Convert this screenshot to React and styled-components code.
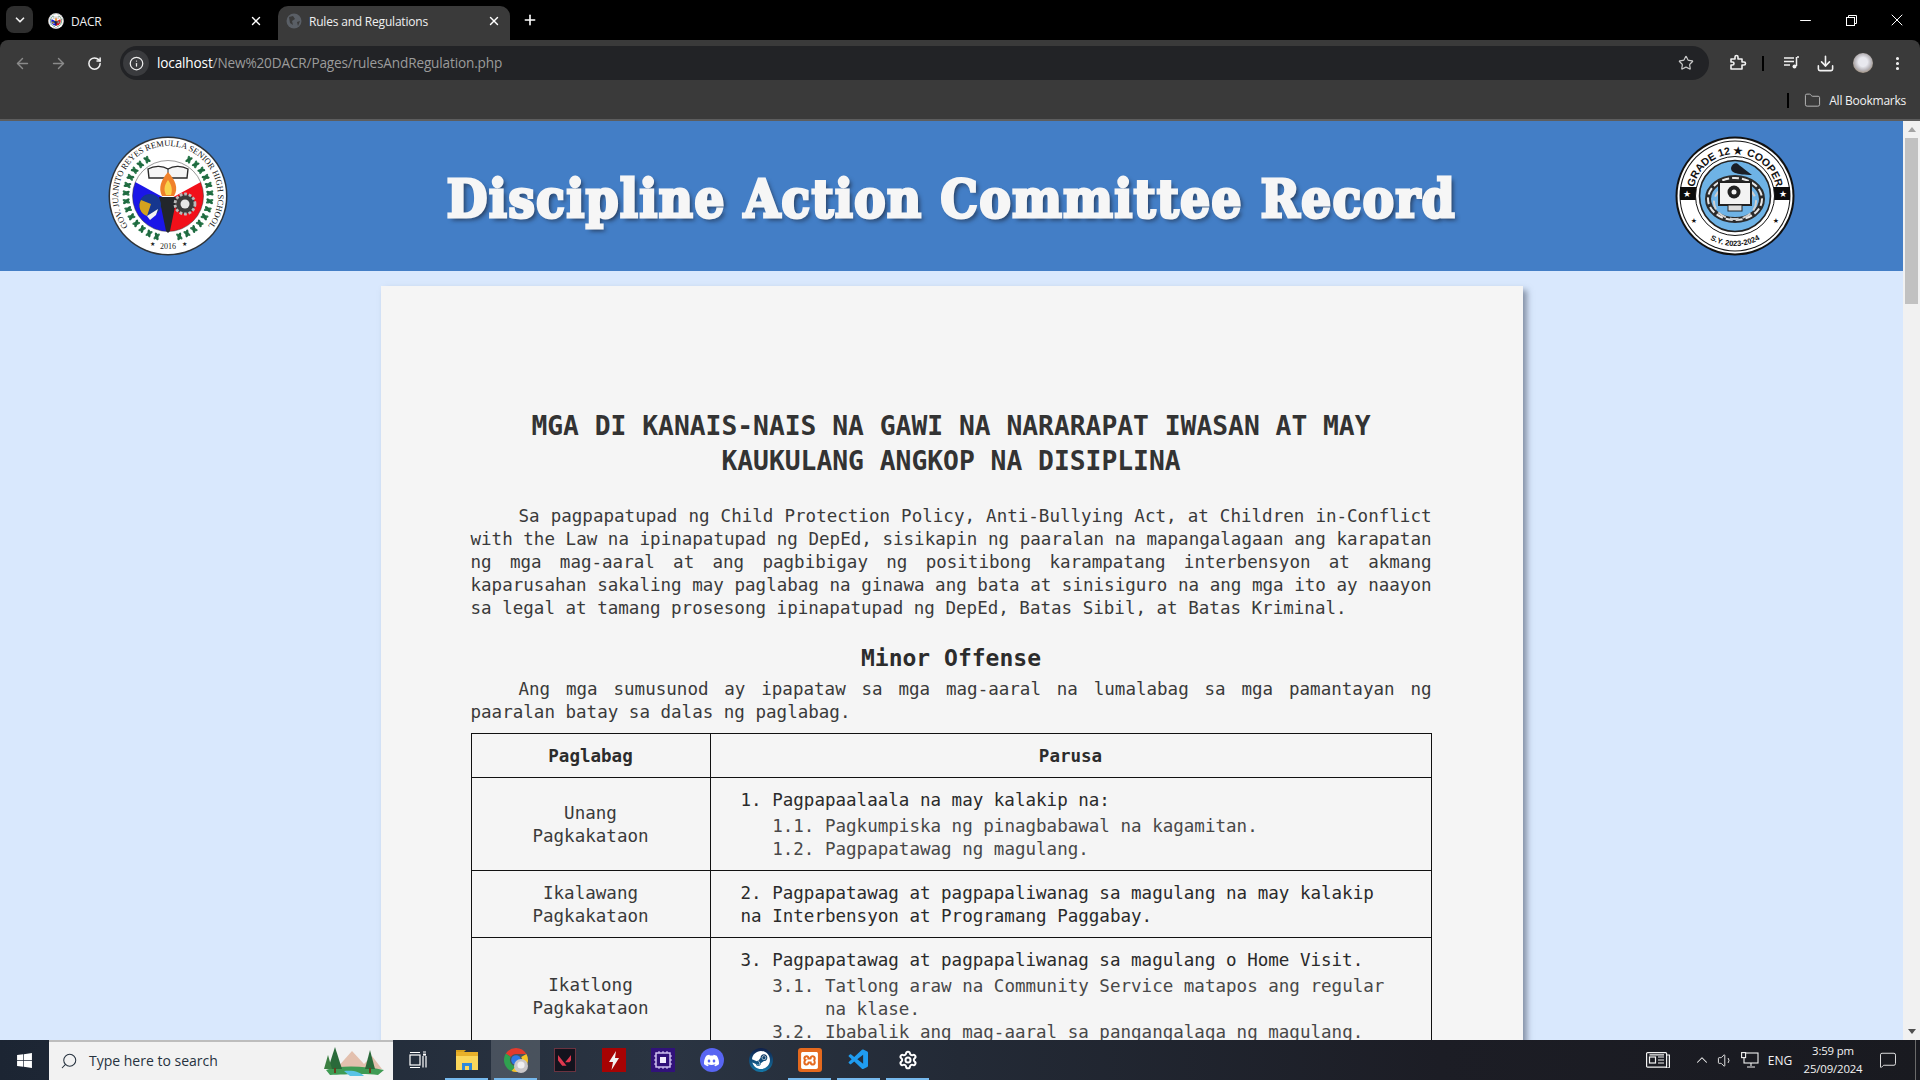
import React from 'react'
import styled, { createGlobalStyle } from 'styled-components'
import {
  ArrowLeft, ArrowRight, RotateCw, Info, Star, Download, MoreVertical, ChevronDown, ChevronUp,
  X, Plus, Minus, Folder, Search, Volume1, MessageSquare, Settings,
} from 'lucide-react'
import { FaWindows } from 'react-icons/fa'
import { SiDiscord, SiSteam, SiValorant, SiXampp } from 'react-icons/si'
import { VscVscode } from 'react-icons/vsc'

const GlobalStyle = createGlobalStyle`
  html, body { margin: 0; padding: 0; height: 100%; overflow: hidden; }
  * { box-sizing: border-box; }
`

const Screen = styled.div`
  width: 1920px;
  height: 1080px;
  display: flex;
  flex-direction: column;
  overflow: hidden;
  background: #000;
  font-family: "Open Sans", "Liberation Sans", sans-serif;
`

/* browser chrome */
const TabStrip = styled.div`
  height: 40px;
  flex: none;
  background: #000;
  display: flex;
  padding: 6px 0 0 6px;
  color: #fff;
`
const TabSearch = styled.div`
  width: 27px;
  height: 27px;
  border-radius: 8px;
  background: #2f2f2f;
  display: flex;
  align-items: center;
  justify-content: center;
  margin-right: 5px;
`
const Tab = styled.div`
  width: 232px;
  height: 34px;
  flex: none;
  display: flex;
  align-items: center;
  padding: 0 ${p => (p.$active ? 9 : 7)}px 4px ${p => (p.$active ? 8 : 10)}px;
  margin-left: ${p => (p.$active ? 8 : 0)}px;
  background: ${p => (p.$active ? '#3a3a3a' : 'transparent')};
  border-radius: 10px 10px 0 0;
  font-size: 12px;
  letter-spacing: -0.2px;
`
const TabTitle = styled.span`
  flex: 1;
  margin-left: 7px;
  color: #f0f0f0;
`
const NewTab = styled.div`
  width: 40px;
  height: 28px;
  display: flex;
  align-items: center;
  justify-content: center;
`
const WindowControls = styled.div`
  margin-left: auto;
  margin-top: -6px;
  display: flex;
  height: 40px;
  align-items: center;
`
const WindowButton = styled.div`
  width: 46px;
  display: flex;
  justify-content: center;
`
const Toolbar = styled.div`
  height: 46px;
  flex: none;
  background: #3a3a3a;
  border-radius: 8px 8px 0 0;
  display: flex;
  align-items: center;
  padding: 0 0 0 4px;
`
const NavButton = styled.div`
  width: ${p => p.$w || 36}px;
  margin-left: ${p => p.$ml || 0}px;
  flex: none;
  display: flex;
  justify-content: center;
  color: ${p => (p.$dim ? '#8a8a8a' : '#f2f2f2')};
`
const Omnibox = styled.div`
  width: 1589px;
  height: 34px;
  flex: none;
  margin: 0 8px;
  border-radius: 17px;
  background: #222326;
  display: flex;
  align-items: center;
  padding: 0 15px 0 3px;
  font-size: 13.6px;
  letter-spacing: -0.15px;
  color: #9b9b9b;
`
const InfoBadge = styled.div`
  width: 26px;
  height: 26px;
  border-radius: 50%;
  background: #3a3b3e;
  color: #eee;
  display: flex;
  align-items: center;
  justify-content: center;
  margin-right: 8px;
`
const UrlText = styled.span`
  margin-top: -2px;
`
const Host = styled.span`
  color: #fff;
`
const StarWrap = styled.div`
  margin-left: auto;
  display: flex;
  color: #c8c8c8;
`
const Divider = styled.div`
  width: 2px;
  height: 15px;
  margin-left: ${p => p.$ml || 0}px;
  background: #000;
  flex: none;
`
const BookmarkBar = styled.div`
  height: 35px;
  flex: none;
  background: #3a3a3a;
  border-bottom: 2px solid #5d5d5d;
  display: flex;
  align-items: center;
  justify-content: flex-end;
  padding: 0 14px 5px 0;
  color: #f2f2f2;
  font-size: 12px;
  letter-spacing: -0.25px;
`
const FolderWrap = styled.div`
  display: flex;
  margin: 0 8px 0 15px;
  color: #b5b5b5;
`
const Avatar = styled.div`
  width: 20px;
  height: 20px;
  border-radius: 50%;
  background: radial-gradient(circle at 50% 45%, #e8e8ee 0 30%, #b9b6bb 55%, #8f7a5c 88%);
`

/* page */
const Viewport = styled.div`
  flex: 1;
  min-height: 0;
  display: flex;
  overflow: hidden;
`
const PageArea = styled.div`
  flex: 1;
  min-width: 0;
  overflow: hidden;
  background: #d9e8fd;
`
const Scrollbar = styled.div`
  width: 17px;
  flex: none;
  background: #f1f1f1;
  display: flex;
  flex-direction: column;
  align-items: center;
  padding: 6px 0;
`
const ScrollArrow = styled.div`
  width: 0;
  height: 0;
  border-left: 4px solid transparent;
  border-right: 4px solid transparent;
  ${p => (p.$down ? 'border-top: 5px solid #505050;' : 'border-bottom: 5px solid #a3a3a3;')}
`
const ScrollThumb = styled.div`
  width: 13px;
  height: 166px;
  margin-top: 6px;
  background: #c1c1c1;
`
const ScrollSpacer = styled.div`
  flex: 1;
`
const Header = styled.header`
  height: 150px;
  background: #437ec6;
  display: flex;
  align-items: center;
  justify-content: space-between;
  padding: 0 108px;
`
const SiteTitle = styled.h1`
  margin: 6px 0 0;
  font-family: "DejaVu Serif Condensed", "DejaVu Serif", serif;
  font-weight: 700;
  font-size: 52px;
  line-height: 1;
  color: #f6f6f6;
  -webkit-text-stroke: 3px #f6f6f6;
  letter-spacing: 1.6px;
  text-shadow: 3px 3px 4px rgba(30, 40, 60, 0.75);
  white-space: nowrap;
`
const Paper = styled.main`
  width: 1142px;
  margin: 15px auto 0;
  padding: 123px 91px 40px 90px;
  background: #f5f5f5;
  box-shadow: 4px 4px 6px rgba(50, 60, 80, 0.5);
  font-family: "DejaVu Sans Mono", "Liberation Mono", monospace;
  font-size: 17.55px;
  line-height: 23px;
  color: #3a3a3a;
`
const PaperTitle = styled.h2`
  margin: 0 0 26px;
  font-size: 26.3px;
  line-height: 35px;
  font-weight: 700;
  text-align: center;
  color: #333;
`
const Paragraph = styled.p`
  margin: 0;
  text-align: justify;
  text-indent: 48px;
`
const SectionTitle = styled.h3`
  margin: 24px 0 6px;
  font-size: 23px;
  line-height: 28px;
  font-weight: 700;
  text-align: center;
  color: #2c2c2c;
`
const RuleTable = styled.table`
  width: 100%;
  margin-top: 9px;
  border-collapse: collapse;
  table-layout: fixed;
`
const HeadCell = styled.th`
  border: 1px solid #111;
  padding: 11px 10px 9px;
  font-weight: 700;
  color: #2c2c2c;
  width: ${p => p.$w || 'auto'};
`
const WhenCell = styled.td`
  border: 1px solid #111;
  padding: 11px 10px 9px;
  text-align: center;
`
const PenaltyCell = styled.td`
  border: 1px solid #111;
  padding: 11px 29px 9px 30px;
  color: #2e2e2e;
`
const MainItem = styled.div`
  margin-bottom: ${p => (p.$alone ? 0 : 3)}px;
  color: #2a2a2a;
`
const SubItem = styled.div`
  padding-left: 8ch;
  text-indent: -5ch;
  color: #484848;
`

/* taskbar */
const Taskbar = styled.footer`
  height: 40px;
  flex: none;
  display: flex;
  background: linear-gradient(90deg, #1c2533 0, #2a3442 35%, #232a36 50%, #1c1d25 75%, #191a20 100%);
  color: #fff;
`
const StartButton = styled.div`
  width: 49px;
  display: flex;
  align-items: center;
  justify-content: center;
`
const SearchBox = styled.div`
  width: 344px;
  background: #f2f2f2;
  border-top: 2px solid #bdbdbd;
  display: flex;
  align-items: center;
  padding: 0 7px 0 11px;
  color: #26323f;
  font-size: 14px;
`
const SearchGlass = styled(Search)`
  transform: scaleX(-1);
`
const SearchLabel = styled.span`
  margin: -2px 0 0 11px;
  flex: 1;
`
const TaskIcon = styled.div`
  width: 49px;
  flex: none;
  display: flex;
  align-items: center;
  justify-content: center;
  position: relative;
  background: ${p => (p.$focus ? 'rgba(255,255,255,0.16)' : 'transparent')};
  &::after {
    content: '';
    display: ${p => (p.$open ? 'block' : 'none')};
    position: absolute;
    left: 3px;
    right: 3px;
    bottom: 0;
    height: 2px;
    background: #76b9ed;
  }
`
const Tray = styled.div`
  margin-left: auto;
  display: flex;
  align-items: center;
  font-size: 12px;
  color: #f2f2f2;
`
const TrayIcon = styled.div`
  width: ${p => p.$w || 24}px;
  margin-left: ${p => p.$ml || 0}px;
  display: flex;
  justify-content: center;
`
const Clock = styled.div`
  width: 76px;
  text-align: center;
  line-height: 18px;
  font-size: 11.4px;
  letter-spacing: -0.15px;
`
const ShowDesktop = styled.div`
  width: 1px;
  height: 40px;
  margin: 0 4px 0 10px;
  background: #6a6a6a;
`

const arcText = (id, d) => <path id={id} d={d} fill="none" />

const SchoolLogo = ({ size = 120, uid = 'school' }) => (
  <svg width={size} height={size} viewBox="0 0 120 120">
    <defs>
      <clipPath id={`${uid}Inner`}><circle cx="60" cy="60" r="35.5" /></clipPath>
    </defs>
    <circle cx="60" cy="60" r="59.5" fill="#2e3338" />
    <circle cx="60" cy="60" r="58" fill="#fff" />
    {arcText(`${uid}Arc`, 'M 31.3 101 A 50 50 0 1 1 88.7 101')}
    <text fontFamily="Liberation Serif, serif" fontSize="8.5" fill="#111">
      <textPath href={`#${uid}Arc`} startOffset="50%" textAnchor="middle">GOV. JUANITO REYES REMULLA SENIOR HIGH SCHOOL</textPath>
    </text>
    {Array.from({ length: 13 }).map((_, i) => {
      const a = 30 + i * 11.2
      return (
        <g key={i}>
          <ellipse cx="60" cy="18" rx="1.5" ry="4" fill="#2c7a4d" transform={`rotate(${a} 60 60) rotate(-32 60 18)`} />
          <ellipse cx="60" cy="18" rx="1.5" ry="4" fill="#1f6a40" transform={`rotate(${a} 60 60) rotate(32 60 18)`} />
          <ellipse cx="60" cy="18" rx="1.5" ry="4" fill="#2c7a4d" transform={`rotate(${-a} 60 60) rotate(32 60 18)`} />
          <ellipse cx="60" cy="18" rx="1.5" ry="4" fill="#1f6a40" transform={`rotate(${-a} 60 60) rotate(-32 60 18)`} />
        </g>
      )
    })}
    <g clipPath={`url(#${uid}Inner)`}>
      <rect x="20" y="20" width="80" height="80" fill="#fff" />
      <polygon points="60,64 20,42 20,100 60,100" fill="#1b16e8" />
      <polygon points="60,64 100,42 100,100 60,100" fill="#f2101a" />
    </g>
    <path d="M40 33 C47 29 55 30 60 33 C65 30 73 29 80 33 L79 42 L41 42 Z" fill="#f5f5f5" stroke="#2b2b2b" strokeWidth="1.4" />
    <path d="M60 33 V42" stroke="#2b2b2b" strokeWidth="1" />
    <circle cx="60" cy="60" r="35.5" fill="none" stroke="#333" strokeWidth="0.5" />
    <path d="M60 36 C53 44 50 52 54 60 L66 60 C71 52 67 44 60 36 Z" fill="#f0812a" />
    <path d="M60 44 C57 48 55 53 58 59 L63 59 C65 53 63 48 60 44 Z" fill="#f9d24a" />
    <path d="M51 61 L69 61 L62 95 L60 97 L58 95 Z" fill="#22262b" />
    <circle cx="42" cy="69" r="11" fill="#16378f" />
    <path d="M33 64 A11 11 0 0 0 39 80 L43 68 Z" fill="#d3a21f" />
    <path d="M39 80 L50 73 L48 79 L42 84 Z" fill="#f2f2f2" />
    <circle cx="77" cy="68" r="10" fill="#3c3c3c" stroke="#bbb" strokeWidth="2.8" strokeDasharray="2.8 1.8" />
    <circle cx="77" cy="68" r="4.5" fill="#e6e6e6" />
    <g fontFamily="Liberation Serif, serif" fill="#222" textAnchor="middle">
      <text x="60" y="113" fontSize="8">2016</text>
      <text x="44" y="110" fontSize="6">★</text>
      <text x="76" y="110" fontSize="6">★</text>
    </g>
  </svg>
)

const ClassLogo = () => (
  <svg width="120" height="120" viewBox="0 0 120 120">
    <circle cx="60" cy="60" r="59.5" fill="#111" />
    <circle cx="60" cy="60" r="57.5" fill="#fff" />
    <circle cx="60" cy="60" r="55.5" fill="#111" />
    <circle cx="60" cy="60" r="54.5" fill="#fff" />
    <rect x="5" y="51" width="110" height="13" fill="#0b0b0b" />
    <circle cx="60" cy="60" r="39.5" fill="#fff" stroke="#111" strokeWidth="1" />
    <circle cx="60" cy="60" r="35.5" fill="#6eb3e6" stroke="#222" strokeWidth="1.6" />
    {arcText('classTop', 'M 18 60 A 42 42 0 0 1 102 60')}
    {arcText('classBottom', 'M 10 60 A 50 50 0 0 0 110 60')}
    <text fontFamily="Liberation Sans, sans-serif" fontWeight="700" fontSize="10.5" fill="#111">
      <textPath href="#classTop" startOffset="50%" textAnchor="middle">GRADE 12 ★ COOPER</textPath>
    </text>
    <text fontFamily="Liberation Sans, sans-serif" fontWeight="700" fontSize="7.6" fill="#111">
      <textPath href="#classBottom" startOffset="50%" textAnchor="middle">S.Y. 2023-2024</textPath>
    </text>
    <g fill="#fff" fontSize="9" textAnchor="middle" fontFamily="DejaVu Sans, sans-serif">
      <text x="12" y="61">★</text>
      <text x="108" y="61">★</text>
    </g>
    <g fill="#111" fontSize="7" textAnchor="middle" fontFamily="DejaVu Sans, sans-serif">
      <text x="19" y="87">★</text>
      <text x="101" y="87">★</text>
    </g>
    <g fill="none">
      <ellipse cx="60" cy="63" rx="27" ry="21" stroke="#2b2b2b" strokeWidth="6" />
      <ellipse cx="60" cy="63" rx="27" ry="21" stroke="#e9e9e9" strokeWidth="2" strokeDasharray="7 3" />
      <ellipse cx="60" cy="66" rx="21" ry="17" stroke="#cfcfcf" strokeWidth="2" strokeDasharray="9 4" />
    </g>
    <rect x="44" y="46" width="32" height="23" fill="#f3f3f3" stroke="#222" strokeWidth="2" />
    <rect x="53" y="69" width="14" height="6" fill="#ddd" stroke="#222" strokeWidth="1" />
    <circle cx="59" cy="56" r="6.5" fill="#222" />
    <circle cx="59" cy="56" r="2.5" fill="#f3f3f3" />
    <path d="M56 32 C57 27 62 26 64 29 C68 32 72 35 77 39 C70 39 63 38 60 37 C57 36 56 34 56 32 Z" fill="#1a1e26" />
  </svg>
)

const ExtensionIcon = () => (
  <svg width="18" height="18" viewBox="0 0 18 18" fill="none" stroke="#f2f2f2" strokeWidth="1.6">
    <path d="M2 5 H6 V3 A1.5 1.5 0 0 1 9 3 V5 H13 V8 H15 A1.5 1.5 0 0 1 15 11 H13 V15 H2 V11 H3.5 A1.5 1.5 0 0 0 3.5 8 H2 Z" strokeLinejoin="round" />
  </svg>
)
const MediaIcon = () => (
  <svg width="16" height="14" viewBox="0 0 16 14" fill="none" stroke="#f2f2f2" strokeWidth="1.5">
    <path d="M0 2 H10 M0 5.5 H10 M0 9 H6" />
    <path d="M13 1 H15 M12.5 1 V10" />
    <circle cx="10.5" cy="10.5" r="2" fill="#f2f2f2" stroke="none" />
  </svg>
)
const RestoreIcon = () => (
  <svg width="11" height="11" viewBox="0 0 11 11" fill="none" stroke="#fff" strokeWidth="1">
    <rect x="0.5" y="2.5" width="8" height="8" />
    <path d="M2.5 2.5 V0.5 H10.5 V8.5 H8.5" />
  </svg>
)
const GlobeFavicon = () => (
  <svg width="16" height="16" viewBox="0 0 16 16">
    <circle cx="8" cy="8" r="7.5" fill="#5a5f66" />
    <path d="M3 4 L7 3 L9 6 L6 8 L7 12 L4 10 Z M11 9 L14 8 L12 13 Z" fill="#3a3a3a" />
  </svg>
)
const ChromeIcon = () => (
  <svg width="26" height="26" viewBox="0 0 26 26">
    <path d="M13 1 A12 12 0 0 1 23.4 7 L13 7 A6 6 0 0 0 7.8 10 L2.8 6.6 A12 12 0 0 1 13 1 Z" fill="#e33b2e" />
    <path d="M2.8 6.6 L7.8 10 A6 6 0 0 0 13 19 L8.5 24.1 A12 12 0 0 1 2.8 6.6 Z" fill="#2fa14f" />
    <path d="M23.4 7 A12 12 0 0 1 8.5 24.1 L13 19 A6 6 0 0 0 18.2 10 Z" fill="#f7c325" />
    <circle cx="13" cy="13" r="4.8" fill="#2f78e6" />
    <circle cx="18" cy="19" r="7" fill="#c9c7c9" />
    <circle cx="18" cy="18" r="3.6" fill="#efeff1" />
  </svg>
)
const ExplorerIcon = () => (
  <svg width="24" height="22" viewBox="0 0 24 22">
    <path d="M1 3 H9 L11 1 H1 Z" fill="#d9a21c" />
    <rect x="1" y="3" width="22" height="18" fill="#fbd75b" />
    <rect x="1" y="3" width="22" height="4" fill="#e8b02a" />
    <path d="M7 21 V14 H17 V21 H14 V17 H10 V21 Z" fill="#2f88d9" />
  </svg>
)
const BoltIcon = () => (
  <svg width="24" height="24" viewBox="0 0 24 24">
    <rect width="24" height="24" fill="#a70303" />
    <path d="M14 3 L7 14 H11 L9.5 22 L17 10 H13 Z" fill="#f2f2f2" />
  </svg>
)
const ChipIcon = () => (
  <svg width="24" height="24" viewBox="0 0 24 24">
    <rect width="24" height="24" fill="#31127a" />
    <rect x="5" y="5" width="14" height="14" fill="none" stroke="#d9cdf7" strokeWidth="1.4" />
    <rect x="9" y="9" width="6" height="6" fill="#f2eefc" />
    <path d="M8 3 V5 M12 3 V5 M16 3 V5 M8 19 V21 M12 19 V21 M16 19 V21 M3 8 H5 M3 12 H5 M3 16 H5 M19 8 H21 M19 12 H21 M19 16 H21" stroke="#d9cdf7" />
  </svg>
)
const SteamBadge = styled.div`
  width: 24px;
  height: 24px;
  border-radius: 50%;
  background: linear-gradient(#10204a, #1478a8);
  display: flex;
  align-items: center;
  justify-content: center;
`
const DiscordBadge = styled.div`
  width: 24px;
  height: 24px;
  border-radius: 50%;
  background: #5865f2;
  display: flex;
  align-items: center;
  justify-content: center;
`
const ValorantBadge = styled.div`
  width: 22px;
  height: 24px;
  background: #13131d;
  border: 1px solid #6b3340;
  display: flex;
  align-items: center;
  justify-content: center;
`
const XamppBadge = styled.div`
  width: 24px;
  height: 24px;
  border-radius: 3px;
  background: #e4691e;
  display: flex;
  align-items: center;
  justify-content: center;
`
const Landscape = () => (
  <svg width="66" height="34" viewBox="0 0 66 34">
    <path d="M16 25 L32 7 L44 20 L52 12 L62 25 Z" fill="#e3c0ae" />
    <path d="M6 26 C20 21 44 22 64 26 L58 31 C42 29 22 31 10 31 Z" fill="#3f9b54" />
    <path d="M24 27 C34 26 40 28 44 32 L30 32 Z" fill="#59c3e6" />
    <path d="M15 3 L22 25 H8 Z" fill="#2a6a3a" />
    <rect x="14" y="24" width="2" height="5" fill="#6a3d1e" />
    <path d="M50 6 L55 25 H45 Z" fill="#2a6a3a" />
    <rect x="49" y="24" width="2" height="5" fill="#6a3d1e" />
    <path d="M8 11 L12 25 H4 Z" fill="#3b7f41" />
  </svg>
)
const TaskViewIcon = () => (
  <svg width="18" height="18" viewBox="0 0 18 18" fill="none" stroke="#fff" strokeWidth="1.2">
    <rect x="1" y="4" width="10" height="10" />
    <path d="M1 1.5 H11 M1 16.5 H11 M14 1 H17 M14 16.5 V5 M17 16.5 V5" />
    <rect x="14" y="2.6" width="3" height="2" fill="#fff" stroke="none" />
  </svg>
)
const NewsIcon = () => (
  <svg width="24" height="16" viewBox="0 0 24 16" fill="none" stroke="#f2f2f2" strokeWidth="1.2">
    <rect x="0.6" y="0.6" width="20" height="14.6" rx="1" />
    <path d="M21 3 H23.4 V13.5 A1.7 1.7 0 0 1 20 15" />
    <rect x="3.5" y="5" width="6" height="6" />
    <path d="M12 5 H18 M12 8 H18 M12 11 H18 M3.5 2.8 H18" />
  </svg>
)
const NetworkIcon = () => (
  <svg width="18" height="16" viewBox="0 0 18 16" fill="none" stroke="#f2f2f2" strokeWidth="1.1">
    <rect x="3" y="1" width="14" height="10" />
    <path d="M10 11 V14 M6 15 H14" />
    <rect x="0.6" y="0.6" width="4" height="5" fill="#1c1d25" />
  </svg>
)

const Discipline = () => (
  <Paper>
    <PaperTitle>MGA DI KANAIS-NAIS NA GAWI NA NARARAPAT IWASAN AT MAY KAUKULANG ANGKOP NA DISIPLINA</PaperTitle>
    <Paragraph>
      Sa pagpapatupad ng Child Protection Policy, Anti-Bullying Act, at Children in-Conflict with the Law na
      ipinapatupad ng DepEd, sisikapin ng paaralan na mapangalagaan ang karapatan ng mga mag-aaral at ang pagbibigay
      ng positibong karampatang interbensyon at akmang kaparusahan sakaling may paglabag na ginawa ang bata at
      sinisiguro na ang mga ito ay naayon sa legal at tamang prosesong ipinapatupad ng DepEd, Batas Sibil, at Batas
      Kriminal.
    </Paragraph>
    <SectionTitle>Minor Offense</SectionTitle>
    <Paragraph>
      Ang mga sumusunod ay ipapataw sa mga mag-aaral na lumalabag sa mga pamantayan ng paaralan batay sa dalas ng
      paglabag.
    </Paragraph>
    <RuleTable>
      <thead>
        <tr>
          <HeadCell $w="239px">Paglabag</HeadCell>
          <HeadCell>Parusa</HeadCell>
        </tr>
      </thead>
      <tbody>
        <tr>
          <WhenCell>Unang<br />Pagkakataon</WhenCell>
          <PenaltyCell>
            <MainItem>1. Pagpapaalaala na may kalakip na:</MainItem>
            <SubItem>1.1. Pagkumpiska ng pinagbabawal na kagamitan.</SubItem>
            <SubItem>1.2. Pagpapatawag ng magulang.</SubItem>
          </PenaltyCell>
        </tr>
        <tr>
          <WhenCell>Ikalawang<br />Pagkakataon</WhenCell>
          <PenaltyCell>
            <MainItem $alone>
              2. Pagpapatawag at pagpapaliwanag sa magulang na may kalakip na Interbensyon at Programang Paggabay.
            </MainItem>
          </PenaltyCell>
        </tr>
        <tr>
          <WhenCell>Ikatlong<br />Pagkakataon</WhenCell>
          <PenaltyCell>
            <MainItem>3. Pagpapatawag at pagpapaliwanag sa magulang o Home Visit.</MainItem>
            <SubItem>3.1. Tatlong araw na Community Service matapos ang regular na klase.</SubItem>
            <SubItem>3.2. Ibabalik ang mag-aaral sa pangangalaga ng magulang.</SubItem>
          </PenaltyCell>
        </tr>
      </tbody>
    </RuleTable>
  </Paper>
)

export default function App() {
  return (
    <Screen>
      <GlobalStyle />
      <TabStrip>
        <TabSearch><ChevronDown size={14} strokeWidth={3} color="#eee" /></TabSearch>
        <Tab>
          <SchoolLogo size={16} uid="favicon" />
          <TabTitle>DACR</TabTitle>
          <X size={14} strokeWidth={2.4} />
        </Tab>
        <Tab $active>
          <GlobeFavicon />
          <TabTitle>Rules and Regulations</TabTitle>
          <X size={14} strokeWidth={2.4} />
        </Tab>
        <NewTab><Plus size={16} strokeWidth={2.4} /></NewTab>
        <WindowControls>
          <WindowButton><Minus size={17} strokeWidth={1.4} /></WindowButton>
          <WindowButton><RestoreIcon /></WindowButton>
          <WindowButton><X size={20} strokeWidth={1.2} /></WindowButton>
        </WindowControls>
      </TabStrip>
      <Toolbar>
        <NavButton $dim><ArrowLeft size={17} /></NavButton>
        <NavButton $dim><ArrowRight size={17} /></NavButton>
        <NavButton><RotateCw size={15} strokeWidth={2.4} /></NavButton>
        <Omnibox>
          <InfoBadge><Info size={15} /></InfoBadge>
          <UrlText><Host>localhost</Host>/New%20DACR/Pages/rulesAndRegulation.php</UrlText>
          <StarWrap><Star size={16} strokeWidth={1.8} /></StarWrap>
        </Omnibox>
        <NavButton $w={41}><ExtensionIcon /></NavButton>
        <Divider $ml={3.5} />
        <NavButton $w={47} $ml={5}><MediaIcon /></NavButton>
        <NavButton $w={20}><Download size={19} strokeWidth={2} /></NavButton>
        <NavButton $w={49} $ml={3}><Avatar /></NavButton>
        <NavButton $w={20}><MoreVertical size={17} strokeWidth={2.4} /></NavButton>
      </Toolbar>
      <BookmarkBar>
        <Divider />
        <FolderWrap><Folder size={17} strokeWidth={1.4} /></FolderWrap>
        All Bookmarks
      </BookmarkBar>
      <Viewport>
        <PageArea>
          <Header>
            <SchoolLogo />
            <SiteTitle>Discipline Action Committee Record</SiteTitle>
            <ClassLogo />
          </Header>
          <Discipline />
        </PageArea>
        <Scrollbar>
          <ScrollArrow />
          <ScrollThumb />
          <ScrollSpacer />
          <ScrollArrow $down />
        </Scrollbar>
      </Viewport>
      <Taskbar>
        <StartButton><FaWindows size={17} /></StartButton>
        <SearchBox>
          <SearchGlass size={18} strokeWidth={1.4} />
          <SearchLabel>Type here to search</SearchLabel>
          <Landscape />
        </SearchBox>
        <TaskIcon><TaskViewIcon /></TaskIcon>
        <TaskIcon $open><ExplorerIcon /></TaskIcon>
        <TaskIcon $open $focus><ChromeIcon /></TaskIcon>
        <TaskIcon><ValorantBadge><SiValorant size={13} color="#e0384f" /></ValorantBadge></TaskIcon>
        <TaskIcon><BoltIcon /></TaskIcon>
        <TaskIcon><ChipIcon /></TaskIcon>
        <TaskIcon><DiscordBadge><SiDiscord size={15} color="#fff" /></DiscordBadge></TaskIcon>
        <TaskIcon><SteamBadge><SiSteam size={18} color="#fff" /></SteamBadge></TaskIcon>
        <TaskIcon $open><XamppBadge><SiXampp size={17} color="#fff" /></XamppBadge></TaskIcon>
        <TaskIcon $open><VscVscode size={24} color="#1f9cf0" /></TaskIcon>
        <TaskIcon $open><Settings size={20} strokeWidth={2.4} color="#fff" /></TaskIcon>
        <Tray>
          <TrayIcon $w={32}><NewsIcon /></TrayIcon>
          <TrayIcon $w={26} $ml={15}><ChevronUp size={18} strokeWidth={1.4} /></TrayIcon>
          <TrayIcon $w={20}><Volume1 size={17} strokeWidth={1.3} /></TrayIcon>
          <TrayIcon $w={30}><NetworkIcon /></TrayIcon>
          <TrayIcon $w={30}>ENG</TrayIcon>
          <Clock>3:59 pm<br />25/09/2024</Clock>
          <TrayIcon $w={34}><MessageSquare size={18} strokeWidth={1.2} /></TrayIcon>
          <ShowDesktop />
        </Tray>
      </Taskbar>
    </Screen>
  )
}
